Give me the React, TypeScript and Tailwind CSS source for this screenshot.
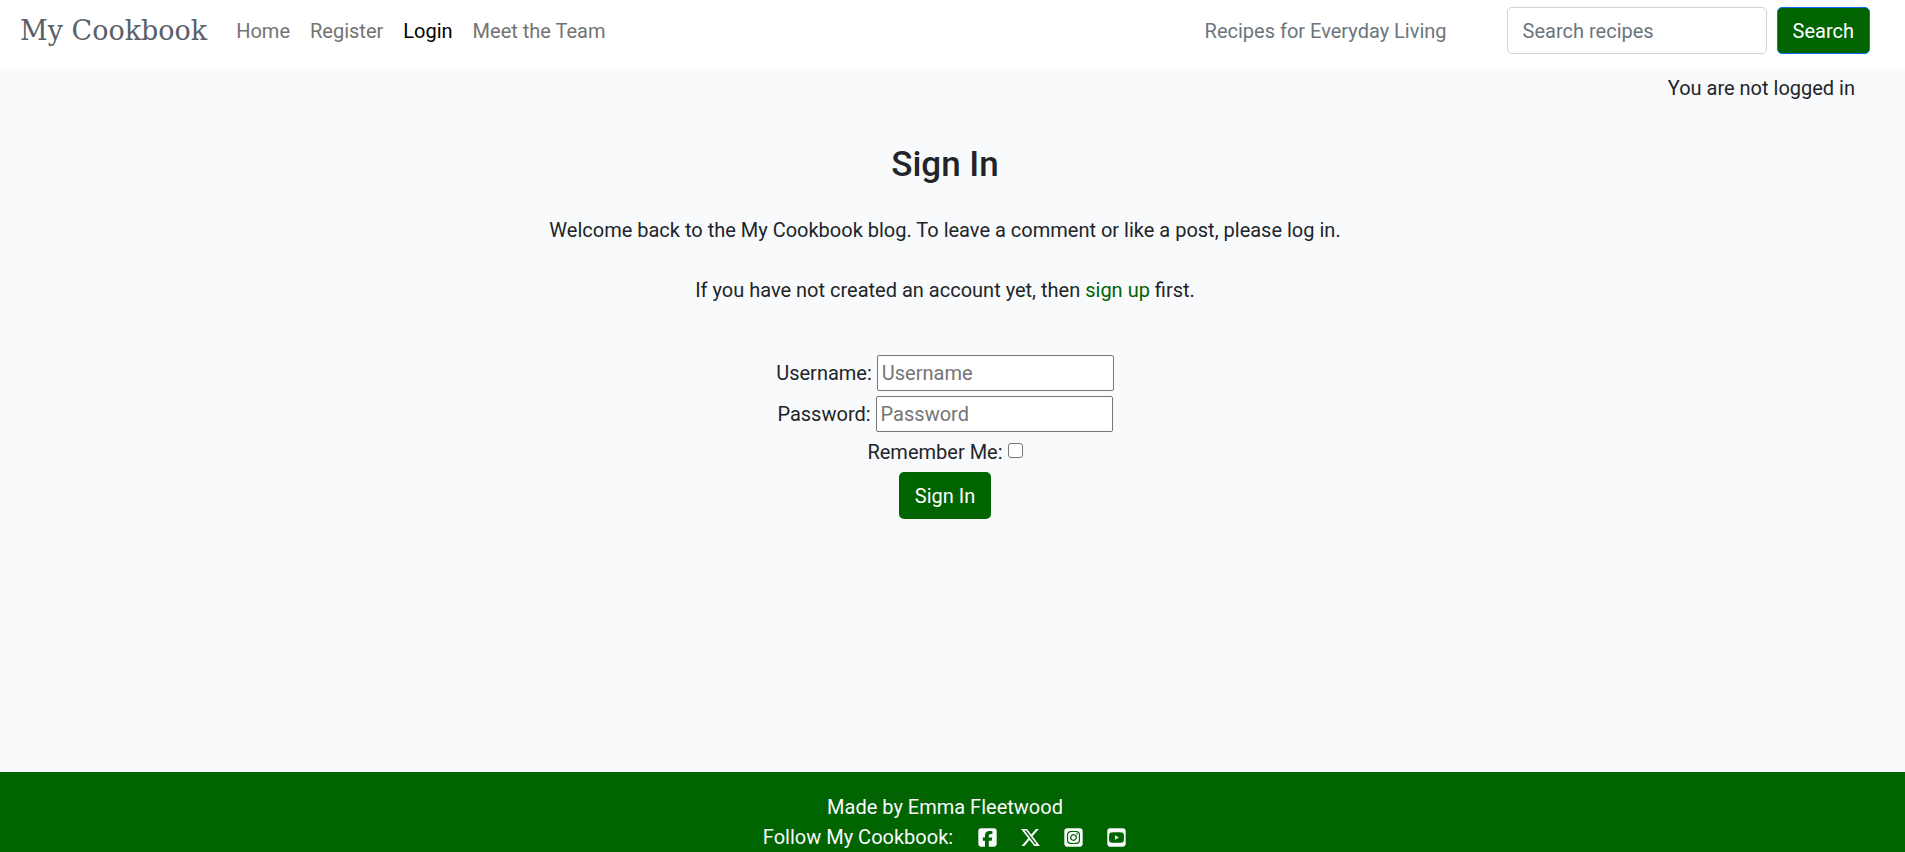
import { FaSquareFacebook, FaSquareInstagram, FaSquareYoutube, FaXTwitter } from 'react-icons/fa6'

const navLinks = [
  { label: 'Home' },
  { label: 'Register' },
  { label: 'Login', active: true },
  { label: 'Meet the Team' },
]

const socials = [
  { label: 'Facebook', Icon: FaSquareFacebook },
  { label: 'X', Icon: FaXTwitter },
  { label: 'Instagram', Icon: FaSquareInstagram },
  { label: 'YouTube', Icon: FaSquareYoutube },
]

function Header() {
  return (
    <header className="flex items-center bg-white pt-[7px] pr-[35px] pb-[14px] pl-5">
      <a
        href="#"
        className="mr-[29px] font-['DejaVu_Serif',serif] text-[27px] leading-[46px] font-light text-[#5a6068]"
      >
        My Cookbook
      </a>
      <nav className="flex gap-5">
        {navLinks.map(({ label, active }) => (
          <a key={label} href="#" className={active ? 'text-black' : 'text-[#737373]'}>
            {label}
          </a>
        ))}
      </nav>
      <span className="mr-[60px] ml-auto text-[#6c757d]">Recipes for Everyday Living</span>
      <form className="flex gap-[10px]" onSubmit={(e) => e.preventDefault()}>
        <input
          type="search"
          aria-label="Search recipes"
          placeholder="Search recipes"
          className="h-[47px] w-[260px] rounded-[5px] border border-[#ced4da] bg-white px-[15px] placeholder:text-[#6c757d]"
        />
        <button
          type="submit"
          className="h-[47px] rounded-[5px] border border-[#0d6efd] bg-[#006400] px-[15px] text-white"
        >
          Search
        </button>
      </form>
    </header>
  )
}

function SignInForm() {
  const field =
    'ml-[5px] h-9 w-[237px] rounded-[2px] border border-[#767676] bg-white px-1 placeholder:text-[#757575]'
  return (
    <form className="mt-[50px] flex flex-col items-center" onSubmit={(e) => e.preventDefault()}>
      <div className="flex items-center">
        <label htmlFor="username">Username:</label>
        <input id="username" type="text" placeholder="Username" className={field} />
      </div>
      <div className="mt-[5px] flex items-center">
        <label htmlFor="password">Password:</label>
        <input id="password" type="password" placeholder="Password" className={field} />
      </div>
      <div className="mt-[5px] flex items-start">
        <label htmlFor="remember">Remember Me:</label>
        <input
          id="remember"
          type="checkbox"
          className="mt-[6px] ml-[5px] size-[15px] appearance-none rounded-[3px] border border-[#767676] bg-white checked:bg-[#006400]"
        />
      </div>
      <button type="submit" className="mt-[5px] h-[47px] rounded-[5px] bg-[#006400] px-4 text-white">
        Sign In
      </button>
    </form>
  )
}

export default function App() {
  return (
    <div className="flex min-h-screen flex-col bg-[#f9fafc] font-[Roboto,sans-serif] text-[20px] leading-[30px] text-[#212529]">
      <Header />
      <p className="mt-[5px] mr-[50px] text-right">You are not logged in</p>
      <main className="flex-1 pr-[15px] text-center">
        <h2 className="mt-10 text-[35px] leading-[44px] font-medium">Sign In</h2>
        <p className="mt-7">
          Welcome back to the My Cookbook blog. To leave a comment or like a post, please log in.
        </p>
        <p className="mt-[30px]">
          If you have not created an account yet, then{' '}
          <a href="#" className="text-[#006400]">
            sign up
          </a>{' '}
          first.
        </p>
        <SignInForm />
      </main>
      <footer className="bg-[#006400] pt-5 pr-[15px] text-center text-[#f9fafc]">
        <p>Made by Emma Fleetwood</p>
        <div className="flex items-center justify-center">
          <span>Follow My Cookbook:</span>
          <div className="ml-6 flex gap-[22px]">
            {socials.map(({ label, Icon }) => (
              <a key={label} href="#" aria-label={label}>
                <Icon className="size-[21px]" />
              </a>
            ))}
          </div>
        </div>
      </footer>
    </div>
  )
}
